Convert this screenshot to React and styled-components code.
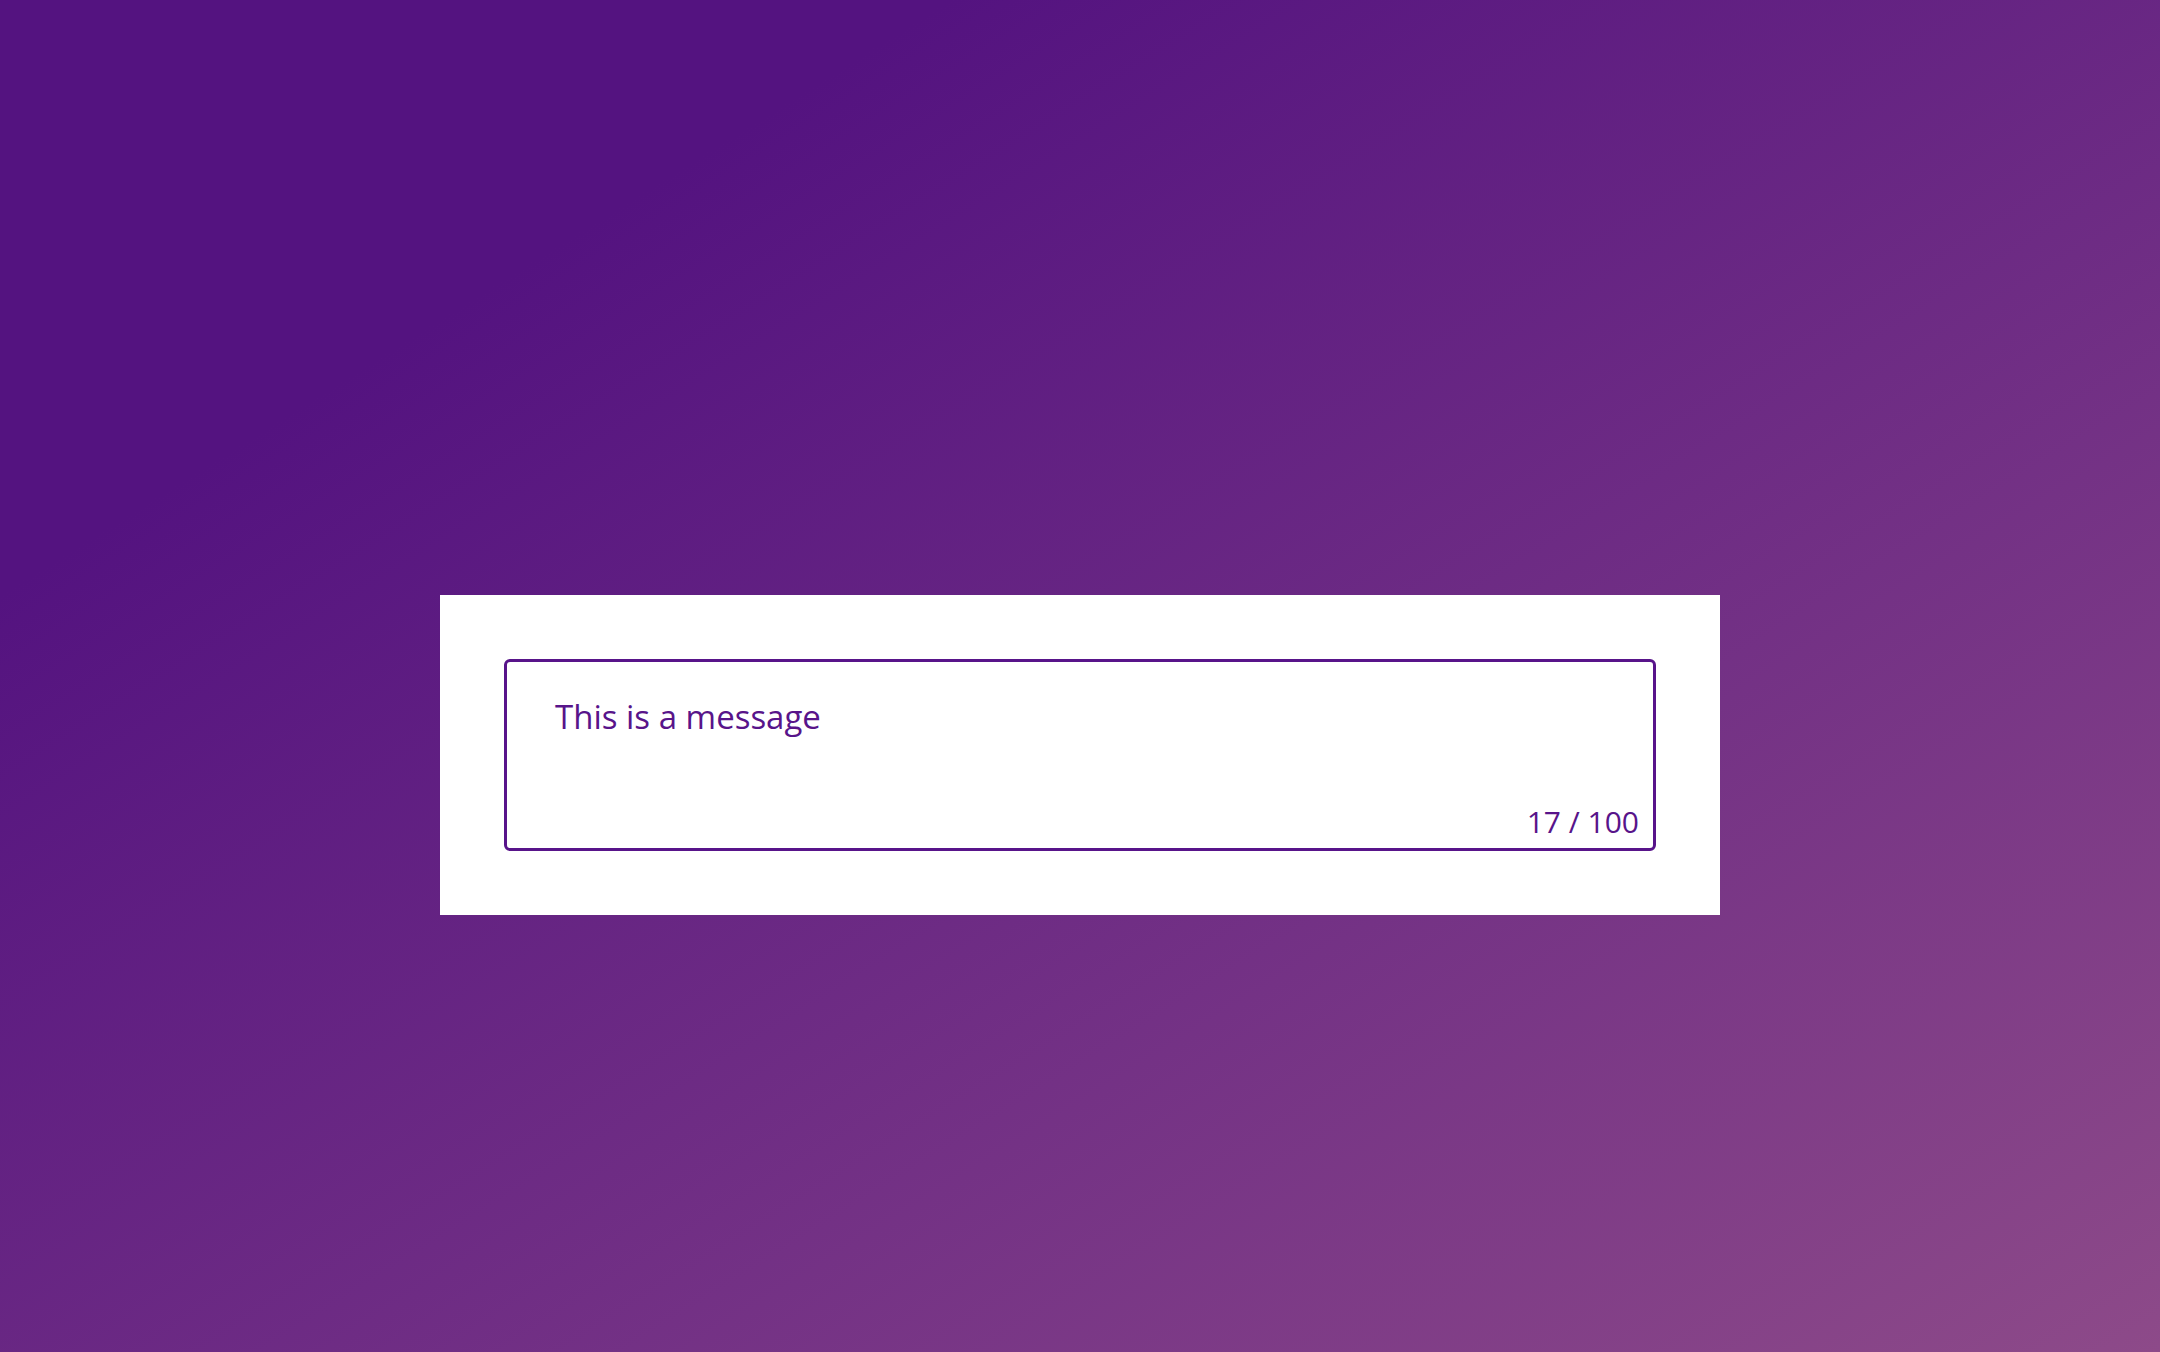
import React, { useState } from 'react';
import styled, { createGlobalStyle } from 'styled-components';

const MAX = 100;

export default function App() {
  const [text, setText] = useState('This is a message');

  return (
    <>
      <GlobalStyle />
      <Page>
        <Card>
          <Field>
            <Input
              value={text}
              maxLength={MAX}
              onChange={e => setText(e.target.value)}
            />
            <Counter>
              {text.length} / {MAX}
            </Counter>
          </Field>
        </Card>
      </Page>
    </>
  );
}

const GlobalStyle = createGlobalStyle`
  * {
    box-sizing: border-box;
  }
  body {
    margin: 0;
    font-family: 'Open Sans', 'Liberation Sans', sans-serif;
  }
`;

const Page = styled.div`
  min-height: 100vh;
  display: flex;
  align-items: center;
  justify-content: center;
  padding-top: 158px;
  background: linear-gradient(to bottom right, #541380 22%, #8d4a89 100%);
`;

const Card = styled.div`
  width: 1280px;
  height: 320px;
  padding: 64px;
  background: #fff;
`;

const Field = styled.div`
  position: relative;
  height: 192px;
  border: 3px solid #58148a;
  border-radius: 6px;
`;

const Input = styled.textarea`
  display: block;
  width: 100%;
  height: 100%;
  padding: 30px 48px;
  border: none;
  outline: none;
  resize: none;
  background: transparent;
  font-family: inherit;
  font-size: 33px;
  line-height: 1.5;
  color: #58148a;
`;

const Counter = styled.span`
  position: absolute;
  right: 14px;
  bottom: 8px;
  font-size: 30px;
  line-height: 1.2;
  color: #58148a;
`;
